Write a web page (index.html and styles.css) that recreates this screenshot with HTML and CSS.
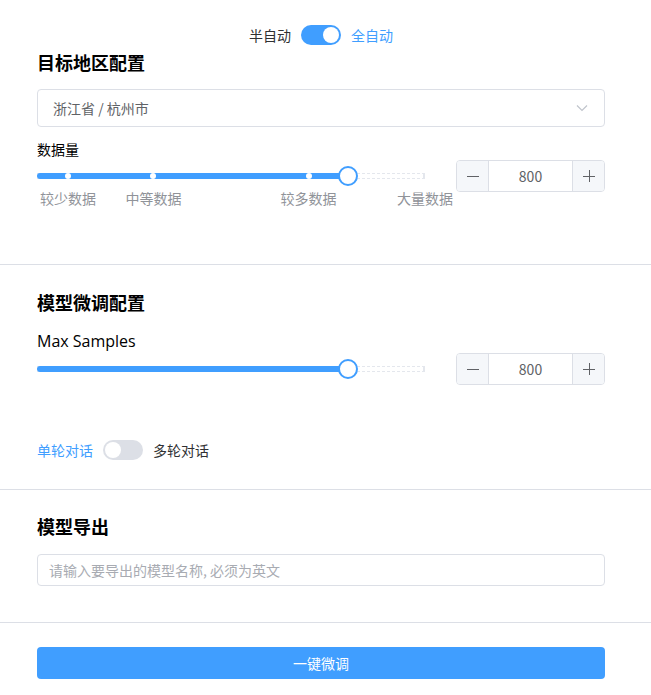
FILE: index.html
```html
<!DOCTYPE html>
<html lang="zh">
<head>
<meta charset="utf-8">
<link rel="stylesheet" href="styles.css">
</head>
<body>
<div class="page">
  <section class="section s1">
    <div class="mode-row">
      <span class="mode-label">半自动</span>
      <span class="switch on"><span class="knob"></span></span>
      <span class="mode-label active">全自动</span>
    </div>
    <h2 class="title t1">目标地区配置</h2>
    <div class="select">
      <span class="select-text">浙江省 / 杭州市</span>
      <svg class="chev" width="12" height="8" viewBox="0 0 12 8"><path d="M1 1.5 L6 6.5 L11 1.5" fill="none" stroke="#c0c4cc" stroke-width="1.2"/></svg>
    </div>
    <div class="label">数据量</div>
    <div class="slider-row">
      <div class="slider">
        <div class="runway">
          <div class="bar" style="width:80%"></div>
          <span class="stop" style="left:8%"></span>
          <span class="stop" style="left:30%"></span>
          <span class="stop" style="left:70%"></span>
          <span class="thumb" style="left:80%"></span>
        </div>
        <div class="marks">
          <span class="mark" style="left:8%">较少数据</span>
          <span class="mark" style="left:30%">中等数据</span>
          <span class="mark" style="left:70%">较多数据</span>
          <span class="mark" style="left:100%">大量数据</span>
        </div>
      </div>
      <div class="num">
        <span class="num-btn"><svg width="12" height="12" viewBox="0 0 12 12"><path d="M0 6.5 H12" stroke="#606266" stroke-width="1"/></svg></span>
        <span class="num-val">800</span>
        <span class="num-btn"><svg width="12" height="12" viewBox="0 0 12 12"><path d="M0 6.5 H12 M6.5 0 V12" stroke="#606266" stroke-width="1"/></svg></span>
      </div>
    </div>
  </section>
  <section class="section s2">
    <h2 class="title t2">模型微调配置</h2>
    <div class="label-en">Max Samples</div>
    <div class="slider-row">
      <div class="slider">
        <div class="runway">
          <div class="bar" style="width:80%"></div>
          <span class="thumb" style="left:80%"></span>
        </div>
      </div>
      <div class="num">
        <span class="num-btn"><svg width="12" height="12" viewBox="0 0 12 12"><path d="M0 6.5 H12" stroke="#606266" stroke-width="1"/></svg></span>
        <span class="num-val">800</span>
        <span class="num-btn"><svg width="12" height="12" viewBox="0 0 12 12"><path d="M0 6.5 H12 M6.5 0 V12" stroke="#606266" stroke-width="1"/></svg></span>
      </div>
    </div>
    <div class="chat-row">
      <span class="mode-label active">单轮对话</span>
      <span class="switch"><span class="knob"></span></span>
      <span class="mode-label">多轮对话</span>
    </div>
  </section>
  <section class="section s3">
    <h2 class="title t3">模型导出</h2>
    <div class="text-input"><span class="placeholder">请输入要导出的模型名称, 必须为英文</span></div>
  </section>
  <section class="section s4">
    <button class="primary">一键微调</button>
  </section>
</div>
</body>
</html>
```
FILE: styles.css
```css
* { box-sizing: border-box; }
html, body { margin: 0; padding: 0; background: #fff; }
body {
  font-family: "Noto Sans CJK SC", "Noto Sans", sans-serif;
  color: #000;
  font-size: 14px;
}
.page { width: 651px; }
.section {
  padding: 0 46px 0 37px;
  border-bottom: 1px solid #dcdfe6;
}
.s1 { padding-top: 25px; padding-bottom: 72px; }
.s2 { padding-bottom: 29px; }
.s3 { padding-bottom: 36px; }
.s4 { border-bottom: none; padding-top: 24px; padding-bottom: 15px; }

.mode-row {
  display: flex;
  justify-content: center;
  align-items: center;
  gap: 10px;
  height: 20px;
}
.mode-label { font-size: 14px; line-height: 20px; color: #303133; }
.mode-label.active { color: #409eff; }
.switch {
  position: relative;
  display: inline-block;
  width: 40px;
  height: 20px;
  border-radius: 10px;
  background: #dcdfe6;
}
.switch.on { background: #409eff; }
.knob {
  position: absolute;
  top: 2px;
  left: 2px;
  width: 16px;
  height: 16px;
  border-radius: 50%;
  background: #fff;
}
.switch.on .knob { left: 22px; }

.title {
  margin: 0;
  font-size: 18px;
  line-height: 24px;
  font-weight: 700;
  color: #000;
}
.t1 { margin-top: 5px; }
.t2 { margin-top: 25px; }
.t3 { margin-top: 24px; }

.select {
  margin-top: 15px;
  height: 38px;
  border: 1px solid #dcdfe6;
  border-radius: 4px;
  display: flex;
  align-items: center;
  justify-content: space-between;
  padding: 0 16px 0 15px;
}
.select-text { color: #606266; font-size: 14px; }

.label { margin-top: 12px; font-size: 14px; line-height: 20px; color: #000; }
.label-en {
  margin-top: 16px;
  font-family: "Open Sans", "Liberation Sans", sans-serif;
  font-size: 16px;
  line-height: 22px;
  color: #000;
}

.slider-row {
  margin-top: 1px;
  display: flex;
  align-items: center;
  gap: 31px;
  height: 32px;
}
.slider { position: relative; width: 388px; height: 32px; display: flex; align-items: center; }
.runway {
  position: relative;
  width: 100%;
  height: 6px;
}
.runway::before {
  content: "";
  position: absolute;
  left: 0;
  right: 0;
  top: 0;
  bottom: 0;
  border-top: 1px dashed #e4e7ed;
  border-bottom: 1px dashed #e4e7ed;
}
.runway::after {
  content: "";
  position: absolute;
  right: 0;
  top: 0;
  width: 2px;
  height: 6px;
  background: #e4e7ed;
}
.bar {
  position: absolute;
  left: 0;
  top: 0;
  height: 6px;
  background: #409eff;
  border-radius: 3px;
}
.stop {
  position: absolute;
  top: 0;
  width: 6px;
  height: 6px;
  margin-left: -3px;
  border-radius: 50%;
  background: #fff;
}
.thumb {
  position: absolute;
  top: 50%;
  width: 20px;
  height: 20px;
  margin: -10px 0 0 -9px;
  border: 2px solid #409eff;
  border-radius: 50%;
  background: #fff;
}
.marks { position: absolute; left: 0; right: 0; top: 28px; height: 20px; }
.mark {
  position: absolute;
  top: 0;
  transform: translateX(-50%);
  font-size: 14px;
  line-height: 20px;
  color: #909399;
  white-space: nowrap;
}

.num {
  width: 149px;
  height: 32px;
  border: 1px solid #dcdfe6;
  border-radius: 4px;
  display: flex;
  overflow: hidden;
}
.num-btn {
  width: 32px;
  background: #f5f7fa;
  display: flex;
  align-items: center;
  justify-content: center;
}
.num-btn:first-child { border-right: 1px solid #dcdfe6; }
.num-btn:last-child { border-left: 1px solid #dcdfe6; }
.num-val {
  flex: 1;
  display: flex;
  align-items: center;
  justify-content: center;
  color: #606266;
  font-size: 14px;
}

.chat-row {
  margin-top: 55px;
  display: flex;
  align-items: center;
  gap: 10px;
  height: 20px;
}

.text-input {
  margin-top: 16px;
  height: 32px;
  border: 1px solid #dcdfe6;
  border-radius: 4px;
  display: flex;
  align-items: center;
  padding: 0 11px;
}
.placeholder { color: #a8abb2; font-size: 14px; }

.primary {
  display: block;
  width: 100%;
  height: 32px;
  border: none;
  border-radius: 4px;
  background: #409eff;
  color: #fff;
  font-family: "Noto Sans CJK SC", sans-serif;
  font-size: 14px;
}
```
